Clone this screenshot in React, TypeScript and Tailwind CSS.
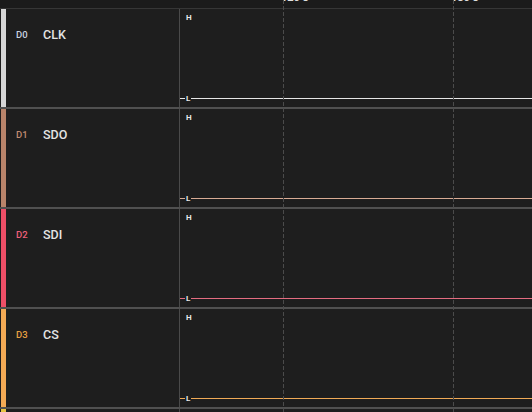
import React from 'react';

interface Channel {
  id: string;
  name: string;
  bar: string;
  tag: string;
  trace: string;
}

const channels: Channel[] = [
  { id: 'D0', name: 'CLK', bar: 'bg-[#d6d6d6]', tag: 'text-[#c9d2e0]', trace: 'bg-[#e6e6e6]' },
  { id: 'D1', name: 'SDO', bar: 'bg-[#b9846a]', tag: 'text-[#c28c72]', trace: 'bg-[#d8ab94]' },
  { id: 'D2', name: 'SDI', bar: 'bg-[#ee4f67]', tag: 'text-[#f0607a]', trace: 'bg-[#e46c80]' },
  { id: 'D3', name: 'CS', bar: 'bg-[#f3aa55]', tag: 'text-[#e9a142]', trace: 'bg-[#f0aa56]' },
];

// time axis ticks, px from the left edge of the view
const ticks = [
  { x: 281, label: '120 s' },
  { x: 451, label: '180 s' },
];

const ChannelRow: React.FC<{ ch: Channel }> = ({ ch }) => (
  <>
    <div className="flex h-[98px] shrink-0">
      <div className="pl-px">
        <div className={`w-[5px] h-full ${ch.bar}`} />
      </div>
      <div className="w-[174px] border-r border-[#4a4a4a]">
        <div className="flex items-center pt-[19px] pl-[10px]">
          <span className={`w-[27px] text-[9.5px] font-medium leading-[14px] ${ch.tag}`}>{ch.id}</span>
          <span className="text-[12.5px] font-medium leading-[14px] text-[#e4e4e4]">{ch.name}</span>
        </div>
      </div>
      <div className="flex-1 flex flex-col">
        <span className="mt-[5px] ml-[6px] text-[8px] font-bold leading-[8px] text-[#e8e8e8]">H</span>
        <div className="flex-1" />
        <div className="flex items-center h-[7px] mb-[5px]">
          <div className={`w-[5px] h-px ${ch.trace}`} />
          <span className="mx-[1px] text-[8px] font-bold leading-[7px] text-[#e8e8e8]">L</span>
          <div className={`flex-1 h-px ${ch.trace}`} />
        </div>
      </div>
    </div>
    <div className="h-[2px] shrink-0 bg-[#505050]" />
  </>
);

export default function App() {
  return (
    <div
      className="relative w-[532px] h-[412px] overflow-hidden bg-[#1e1e1e] flex flex-col"
      style={{ fontFamily: 'Roboto, "Liberation Sans", sans-serif' }}
    >
      <div className="relative h-[9px] shrink-0 border-b border-[#363636] bg-[#1b1b1b] overflow-hidden">
        {ticks.map(t => (
          <span
            key={t.x}
            className="absolute top-[-8px] text-[11px] font-bold leading-[11px] text-[#e0e0e0]"
            style={{ left: t.x }}
          >
            {t.label}
          </span>
        ))}
      </div>

      {channels.map(ch => (
        <ChannelRow key={ch.id} ch={ch} />
      ))}

      <div className="flex flex-1">
        <div className="pl-px">
          <div className="w-[5px] h-full bg-[#e8c542]" />
        </div>
        <div className="w-[174px] border-r border-[#4a4a4a]" />
      </div>

      <svg className="absolute inset-0 pointer-events-none" width="532" height="412">
        {ticks.map(t => (
          <line
            key={t.x}
            x1={t.x + 2.5}
            x2={t.x + 2.5}
            y1={0}
            y2={412}
            stroke="#4b4b4b"
            strokeWidth="1"
            strokeDasharray="4 2"
          />
        ))}
      </svg>
    </div>
  );
}
